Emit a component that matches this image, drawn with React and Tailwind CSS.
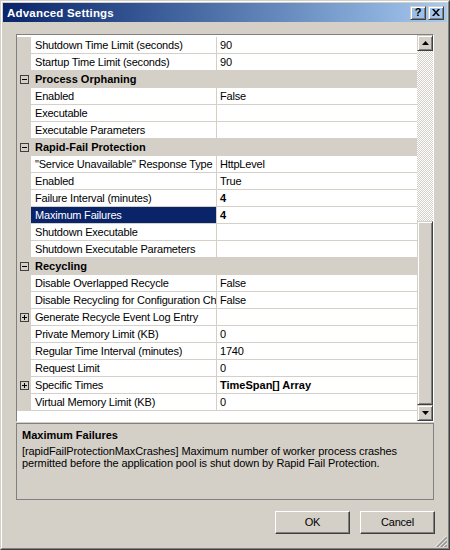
import React from 'react';

const rows = [
  { name: 'Shutdown Time Limit (seconds)', value: '90' },
  { name: 'Startup Time Limit (seconds)', value: '90' },
  { cat: 'Process Orphaning' },
  { name: 'Enabled', value: 'False' },
  { name: 'Executable', value: '' },
  { name: 'Executable Parameters', value: '' },
  { cat: 'Rapid-Fail Protection' },
  { name: '"Service Unavailable" Response Type', value: 'HttpLevel' },
  { name: 'Enabled', value: 'True' },
  { name: 'Failure Interval (minutes)', value: '4', bold: true },
  { name: 'Maximum Failures', value: '4', bold: true, selected: true },
  { name: 'Shutdown Executable', value: '' },
  { name: 'Shutdown Executable Parameters', value: '' },
  { cat: 'Recycling' },
  { name: 'Disable Overlapped Recycle', value: 'False' },
  { name: 'Disable Recycling for Configuration Changes', value: 'False' },
  { name: 'Generate Recycle Event Log Entry', value: '', expand: true },
  { name: 'Private Memory Limit (KB)', value: '0' },
  { name: 'Regular Time Interval (minutes)', value: '1740' },
  { name: 'Request Limit', value: '0' },
  { name: 'Specific Times', value: 'TimeSpan[] Array', bold: true, expand: true },
  { name: 'Virtual Memory Limit (KB)', value: '0' },
];

// classic 3d raised edge
const raised =
  'border border-[#d4d0c8] border-r-[#404040] border-b-[#404040] shadow-[inset_1px_1px_0_#ffffff,inset_-1px_-1px_0_#808080]';

const Box = ({ plus }) => (
  <div className="w-[9px] h-[9px] border border-[#404040] relative">
    <div className="absolute left-[1px] top-[3px] w-[5px] h-px bg-black" />
    {plus && <div className="absolute left-[3px] top-[1px] w-px h-[5px] bg-black" />}
  </div>
);

const Arrow = ({ down }) => (
  <svg width="7" height="4" viewBox="0 0 7 4">
    {down ? <polygon points="0,0 7,0 3.5,4" fill="#000" /> : <polygon points="0,4 7,4 3.5,0" fill="#000" />}
  </svg>
);

const Row = ({ row }) => {
  if (row.cat) {
    return (
      <div className="flex h-[17px] bg-[#d4d0c8]">
        <div className="w-[14px] flex items-center justify-center">
          <Box />
        </div>
        <div className="pl-[4px] font-bold leading-[17px] tracking-normal whitespace-nowrap">{row.cat}</div>
      </div>
    );
  }
  return (
    <div className="flex h-[17px]">
      <div className="w-[14px] shrink-0 bg-[#d4d0c8] flex items-center justify-center">
        {row.expand && <Box plus />}
      </div>
      <div className="flex flex-1 min-w-0 border-b border-[#d4d0c8]">
        <div
          className={`w-[186px] shrink-0 border-r border-[#d4d0c8] pl-[4px] leading-[16px] whitespace-nowrap overflow-hidden ${
            row.selected ? 'bg-[#0a246a] text-white' : 'bg-white'
          }`}
        >
          {row.name}
        </div>
        <div className={`flex-1 bg-white pl-[3px] leading-[16px] whitespace-nowrap overflow-hidden ${row.bold ? 'font-bold tracking-normal' : ''}`}>
          {row.value}
        </div>
      </div>
    </div>
  );
};

export default function App() {
  return (
    <div className="w-[450px] h-[550px] relative border border-[#d4d0c8] border-r-[#404040] border-b-[#404040] bg-[#d4d0c8] text-[11px] text-black tracking-[-0.2px] font-['Liberation_Sans',Arial,sans-serif]">
      <div className="h-full border border-white border-r-[#808080] border-b-[#808080] p-px flex flex-col">
        {/* title bar */}
        <div className="h-[19px] shrink-0 flex items-center bg-gradient-to-r from-[#0a246a] to-[#a6caf0] pl-[4px] pr-[3px]">
          <span className="flex-1 text-white font-bold tracking-[0.2px] text-[11.5px] leading-[19px] pt-px">Advanced Settings</span>
          <div className={`w-[16px] h-[14px] ${raised} flex items-center justify-center font-bold text-[11px] leading-none tracking-normal`}>?</div>
          <div className={`w-[16px] h-[14px] ml-[2px] ${raised} flex items-center justify-center`}>
            <svg width="8" height="7" viewBox="0 0 8 7">
              <path d="M0 0 L2 0 L4 2.5 L6 0 L8 0 L5 3.5 L8 7 L6 7 L4 4.5 L2 7 L0 7 L3 3.5 Z" fill="#000" />
            </svg>
          </div>
        </div>

        <div className="flex-1 flex flex-col px-[13px] pt-[12px]">
          {/* property grid */}
          <div className="h-[388px] flex border border-[#808080] border-r-white border-b-white">
            <div className="flex-1 min-w-0 bg-white overflow-hidden pt-[2px]">
              {rows.map((r, i) => (
                <Row key={i} row={r} />
              ))}
            </div>
            <div className="w-[16px] flex flex-col">
              <div className={`h-[16px] ${raised} flex items-center justify-center`}>
                <Arrow />
              </div>
              <div className="h-[170px] bg-[image:repeating-conic-gradient(#d4d0c8_0%_25%,#ffffff_0%_50%)] bg-[length:2px_2px]" />
              <div className={`flex-1 ${raised}`} />
              <div className={`h-[16px] ${raised} flex items-center justify-center`}>
                <Arrow down />
              </div>
            </div>
          </div>

          {/* description */}
          <div className="mt-px h-[77px] border border-[#808080] pl-[5px] pt-[5px]">
            <div className="font-bold leading-[13px] tracking-normal mb-[3px]">Maximum Failures</div>
            <div className="leading-[12px] pr-2 tracking-[-0.1px]">
              [rapidFailProtectionMaxCrashes] Maximum number of worker process crashes permitted before the application pool is shut down by Rapid Fail Protection.
            </div>
          </div>

          {/* buttons */}
          <div className="mt-[11px] flex justify-end gap-[10px] -mr-px">
            <button className="w-[75px] h-[23px] border border-white border-r-[#404040] border-b-[#404040] shadow-[inset_-1px_-1px_0_#808080] bg-[#d4d0c8]">
              OK
            </button>
            <button className="w-[75px] h-[23px] border border-white border-r-[#404040] border-b-[#404040] shadow-[inset_-1px_-1px_0_#808080] bg-[#d4d0c8]">
              Cancel
            </button>
          </div>
        </div>
      </div>

      {/* size grip */}
      <svg className="absolute right-[2px] bottom-[2px]" width="12" height="12" viewBox="0 0 12 12">
        {[0, 4, 8].map((o) => (
          <g key={o}>
            <line x1={o + 0.5} y1="12" x2="12" y2={o + 0.5} stroke="#ffffff" strokeWidth="1" />
            <line x1={o + 1.5} y1="12" x2="12" y2={o + 1.5} stroke="#808080" strokeWidth="1" />
            <line x1={o + 2.5} y1="12" x2="12" y2={o + 2.5} stroke="#808080" strokeWidth="1" />
          </g>
        ))}
      </svg>
    </div>
  );
}
